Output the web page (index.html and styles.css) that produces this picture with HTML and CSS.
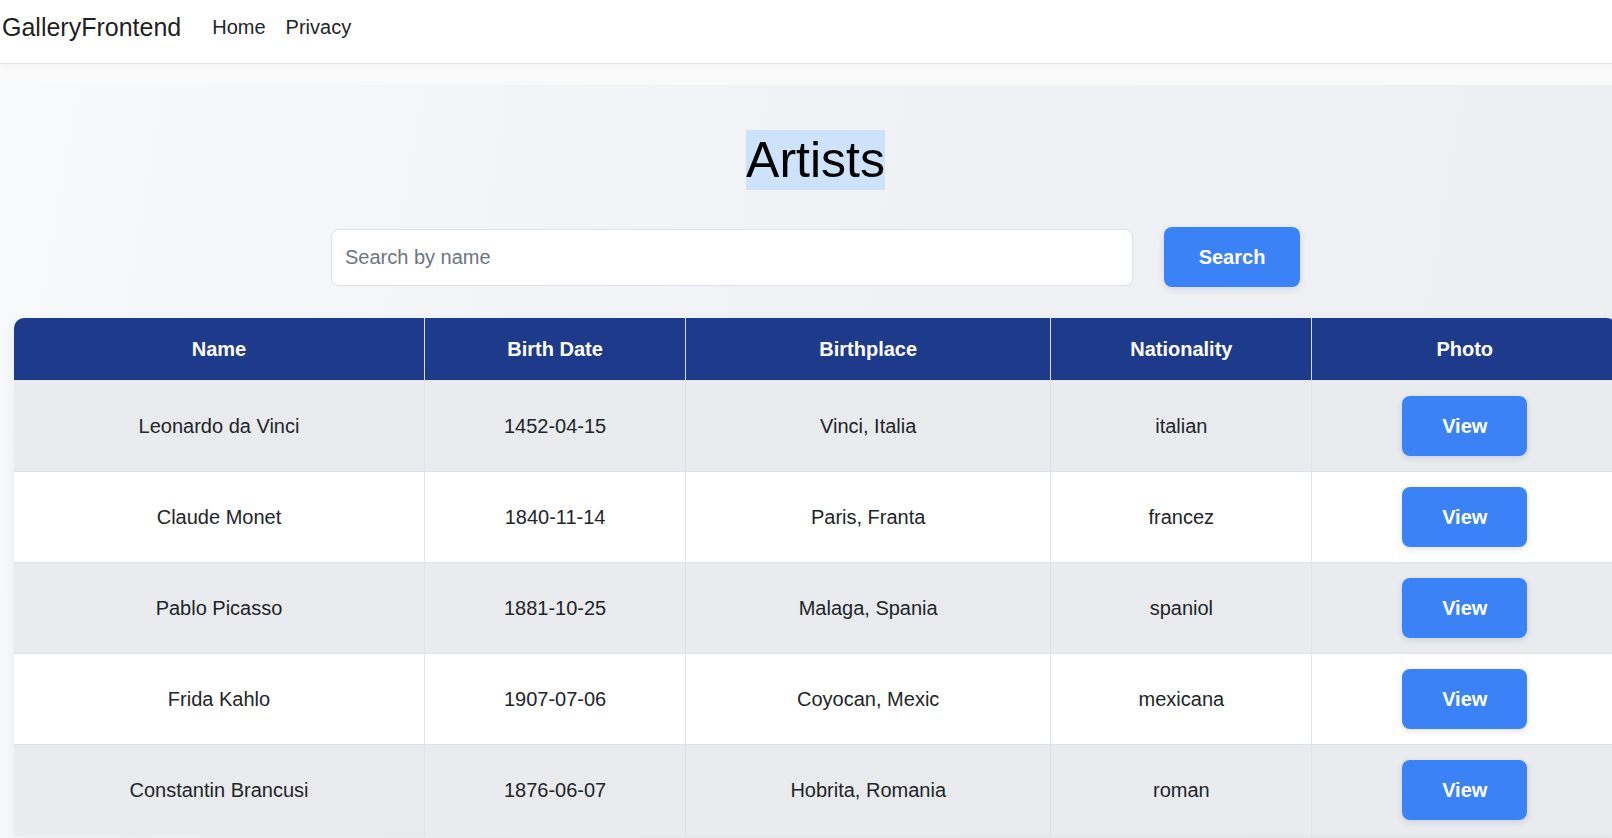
FILE: index.html
```html
<!DOCTYPE html>
<html lang="en">
<head>
<meta charset="utf-8">
<title>Artists - GalleryFrontend</title>
<link rel="stylesheet" href="styles.css">
</head>
<body>
<header class="navbar">
  <a class="brand" href="#">GalleryFrontend</a>
  <nav class="nav">
    <a class="nav-link" href="#">Home</a>
    <a class="nav-link" href="#">Privacy</a>
  </nav>
</header>
<div class="gap"></div>
<main class="page">
  <h1 class="title"><span class="title-sel">Artists</span></h1>
  <form class="search">
    <input class="search-input" type="text" placeholder="Search by name">
    <button class="btn btn-search" type="button">Search</button>
  </form>
  <div class="table-wrap">
    <table class="artists">
      <colgroup>
        <col class="c1"><col class="c2"><col class="c3"><col class="c4"><col class="c5">
      </colgroup>
      <thead>
        <tr><th>Name</th><th>Birth Date</th><th>Birthplace</th><th>Nationality</th><th>Photo</th></tr>
      </thead>
      <tbody>
        <tr class="odd"><td>Leonardo da Vinci</td><td>1452-04-15</td><td>Vinci, Italia</td><td>italian</td><td><button class="btn btn-view" type="button">View</button></td></tr>
        <tr><td>Claude Monet</td><td>1840-11-14</td><td>Paris, Franta</td><td>francez</td><td><button class="btn btn-view" type="button">View</button></td></tr>
        <tr class="odd"><td>Pablo Picasso</td><td>1881-10-25</td><td>Malaga, Spania</td><td>spaniol</td><td><button class="btn btn-view" type="button">View</button></td></tr>
        <tr><td>Frida Kahlo</td><td>1907-07-06</td><td>Coyocan, Mexic</td><td>mexicana</td><td><button class="btn btn-view" type="button">View</button></td></tr>
        <tr class="odd"><td>Constantin Brancusi</td><td>1876-06-07</td><td>Hobrita, Romania</td><td>roman</td><td><button class="btn btn-view" type="button">View</button></td></tr>
      </tbody>
    </table>
  </div>
</main>
</body>
</html>
```
FILE: styles.css
```css
html, body {
  margin: 0;
  padding: 0;
}
body {
  font-family: "Liberation Sans", Arial, sans-serif;
  color: #212529;
  background: #fbfbfc;
  overflow: hidden;
  width: 1631px;
}
a { text-decoration: none; }

.navbar {
  height: 63px;
  border-bottom: 1px solid #e3e3e3;
  background: #ffffff;
  display: flex;
  align-items: flex-start;
  padding: 0 0 0 2px;
  box-shadow: 0 2px 10px rgba(0, 0, 0, 0.035);
  position: relative;
}
.brand {
  font-size: 25px;
  line-height: 37.5px;
  padding-top: 9px;
  color: rgba(0, 0, 0, 0.9);
  margin-right: 21px;
}
.nav {
  display: flex;
  padding-top: 12px;
}
.nav-link {
  font-size: 20px;
  line-height: 30px;
  padding: 0 10px;
  color: #212529;
}

.gap {
  height: 21px;
  background: linear-gradient(180deg, #fbfbfb 0%, #f9f9fa 100%);
}

.page {
  background: linear-gradient(100deg, #f8f9fa 0%, #f1f2f5 45%, #eceef1 100%);
  padding: 45px 14px 40px;
  min-height: 800px;
}

.title {
  margin: 0 0 37px;
  text-align: center;
  font-size: 50px;
  font-weight: 400;
  line-height: 60px;
  color: #000000;
}
.title-sel {
  display: inline-block;
  background: #cde3fb;
  line-height: 60px;
}

.search {
  display: flex;
  justify-content: center;
  align-items: center;
  gap: 31px;
  margin: 0 0 31px;
}
.search-input {
  width: 802px;
  height: 57px;
  box-sizing: border-box;
  border: 1px solid #dfe2e6;
  border-radius: 8px;
  background: #ffffff;
  padding: 0 13px;
  font-family: "Liberation Sans", Arial, sans-serif;
  font-size: 20px;
  color: #212529;
  outline: none;
}
.search-input::placeholder {
  color: #6c757d;
}

.btn {
  font-family: "Liberation Sans", Arial, sans-serif;
  font-weight: 700;
  font-size: 20px;
  line-height: 30px;
  color: #ffffff;
  background: #3b82f6;
  border: none;
  border-radius: 8px;
  box-shadow: 0 2px 6px rgba(30, 58, 138, 0.15);
  cursor: pointer;
}
.btn-search {
  width: 136px;
  height: 60px;
  padding: 0;
}
.btn-view {
  width: 125px;
  height: 60px;
  padding: 0;
  vertical-align: middle;
}

.table-wrap {
  width: 1603px;
  border-radius: 10px 10px 0 0;
  overflow: hidden;
  box-shadow: 0 4px 14px rgba(0, 0, 0, 0.06);
}
.artists {
  width: 1603px;
  table-layout: fixed;
  border-collapse: collapse;
  font-size: 20px;
  background: #ffffff;
}
.c1 { width: 410.5px; }
.c2 { width: 261.2px; }
.c3 { width: 365px; }
.c4 { width: 261.3px; }
.c5 { width: 305px; }

.artists th {
  background: #1e3a8a;
  color: #ffffff;
  font-weight: 700;
  line-height: 30px;
  padding: 16px 10px 16px;
  text-align: center;
  border-right: 1px solid #d9dde6;
}
.artists th:last-child,
.artists td:last-child {
  border-right: none;
}
.artists td {
  text-align: center;
  line-height: 30px;
  padding: 15px 10px 15px;
  border-top: 1px solid #dfe3e8;
  border-right: 1px solid #dfe3e8;
  color: #212529;
}
.artists tr.odd td {
  background: #e9ebee;
}
```
